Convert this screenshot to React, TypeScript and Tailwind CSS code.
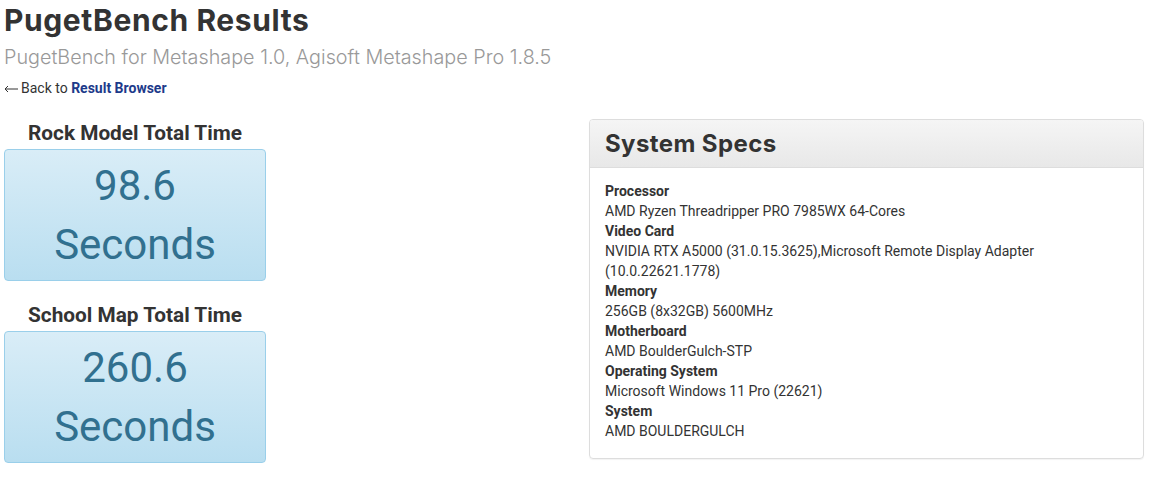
import React from "react";

const specs: [string, string[]][] = [
  ["Processor", ["AMD Ryzen Threadripper PRO 7985WX 64-Cores"]],
  ["Video Card", ["NVIDIA RTX A5000 (31.0.15.3625),Microsoft Remote Display Adapter", "(10.0.22621.1778)"]],
  ["Memory", ["256GB (8x32GB) 5600MHz"]],
  ["Motherboard", ["AMD BoulderGulch-STP"]],
  ["Operating System", ["Microsoft Windows 11 Pro (22621)"]],
  ["System", ["AMD BOULDERGULCH"]],
];

function ScoreBox({ title, value }: { title: string; value: string }) {
  return (
    <div className="flex flex-col">
      <div className="text-center text-[20.8px] font-bold leading-[28px] text-[#333] pt-[5px] pb-[2px]">{title}</div>
      <div className="h-[132px] rounded-[4px] border border-[#9acfea] bg-gradient-to-b from-[#d9edf7] to-[#b9def0] text-center text-[#31708f] text-[42px] leading-[59px] pt-[6px]">
        <div>{value}</div>
        <div>Seconds</div>
      </div>
    </div>
  );
}

export default function App() {
  return (
    <div className="bg-white w-[1165px] h-[487px] overflow-hidden text-[#333]" style={{ fontFamily: "Roboto, 'Liberation Sans', sans-serif" }}>
      <div className="pl-[4px]">
        <h1 className="text-[30px] font-bold leading-[40px] text-[#333] tracking-[0.6px]" style={{ fontFamily: "Inter, 'Noto Sans', sans-serif" }}>
          PugetBench Results
        </h1>
        <div className="text-[19.8px] font-light leading-[32px] text-[#999] mt-[1px]" style={{ fontFamily: "Inter, 'Noto Sans', sans-serif" }}>
          PugetBench for Metashape 1.0, Agisoft Metashape Pro 1.8.5
        </div>
        <div className="flex items-center text-[14px] leading-[20px] mt-[5px] text-[#333]">
          <svg width="14" height="8" viewBox="0 0 14 8" className="mr-[3px] mt-[2px]" aria-hidden="true">
            <path d="M1 4H14M1 4L4 1M1 4L4 7" stroke="#333" strokeWidth="1" fill="none" />
          </svg>
          <span>
            Back to <a className="font-bold text-[#1d3a8a]">Result Browser</a>
          </span>
        </div>
        <div className="flex mt-[16px]">
          <div className="w-[262px] flex flex-col gap-[15px]">
            <ScoreBox title="Rock Model Total Time" value="98.6" />
            <ScoreBox title="School Map Total Time" value="260.6" />
          </div>
          <div className="ml-[323px] mt-[5px] w-[555px] h-[340px] rounded-[4px] border border-[#ddd] shadow-[0_1px_1px_rgba(0,0,0,0.05)] overflow-hidden">
            <div className="h-[48px] bg-gradient-to-b from-[#f5f5f5] to-[#e8e8e8] border-b border-[#ddd] px-[15px] flex items-center">
              <span className="text-[24px] font-bold text-[#333] tracking-[0.4px]" style={{ fontFamily: "Inter, 'Noto Sans', sans-serif" }}>System Specs</span>
            </div>
            <div className="px-[15px] pt-[13px] text-[14px] leading-[20px] text-[#333]">
              {specs.map(([k, vals]) => (
                <div key={k}>
                  <div className="font-bold">{k}</div>
                  {vals.map((v) => (
                    <div key={v}>{v}</div>
                  ))}
                </div>
              ))}
            </div>
          </div>
        </div>
      </div>
    </div>
  );
}
